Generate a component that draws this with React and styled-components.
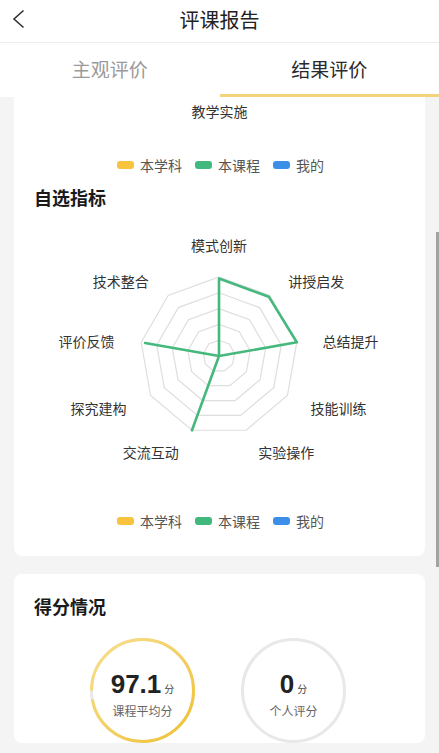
import styled, { createGlobalStyle } from "styled-components";

const GlobalStyle = createGlobalStyle`
  body {
    margin: 0;
    background: #f4f4f4;
    font-family: "Noto Sans CJK SC", "Noto Sans", sans-serif;
  }
`;

const AXES = ["模式创新", "讲授启发", "总结提升", "技能训练", "实验操作", "交流互动", "探究建构", "评价反馈", "技术整合"];
const VALUES = [0.98, 0.98, 1, 0, 0, 1, 0, 0.95, 0];
const LEGEND = [
  { name: "本学科", color: "#f8c43f" },
  { name: "本课程", color: "#41b97c" },
  { name: "我的", color: "#3b8fe8" },
];

const CX = 205;
const CY = 132;
const R = 79;

const pt = (i, r) => {
  const a = (i * 2 * Math.PI) / AXES.length;
  return [CX + r * Math.sin(a), CY - r * Math.cos(a)];
};

const Legend = () => (
  <LegendRow>
    {LEGEND.map((l) => (
      <LegendItem key={l.name}>
        <Swatch $color={l.color} />
        {l.name}
      </LegendItem>
    ))}
  </LegendRow>
);

const Radar = () => {
  const rings = [1, 2, 3, 4, 5].map((k) =>
    AXES.map((_, i) => pt(i, (R * k) / 5).join(",")).join(" ")
  );
  const line = VALUES.map((v, i) => pt(i, R * v).join(",")).join(" ");
  return (
    <ChartSvg viewBox="0 0 411 250">
      {rings.map((p, k) => (
        <polygon key={k} points={p} fill="none" stroke="#dedede" strokeWidth="1.2" />
      ))}
      <polygon points={line} fill="none" stroke="#45b97c" strokeWidth="2.6" strokeLinejoin="round" />
      {AXES.map((name, i) => {
        const a = (i * 2 * Math.PI) / AXES.length;
        const s = Math.sin(a);
        const [x, y] = pt(i, 100);
        if (i === 0) {
          return (
            <text key={name} x={CX} y={CY - 111} textAnchor="middle" dominantBaseline="central">
              {name}
            </text>
          );
        }
        return (
          <text
            key={name}
            x={x + (s > 0 ? 5 : -6)}
            y={y + 2}
            textAnchor={s > 0 ? "start" : "end"}
            dominantBaseline="central"
          >
            {name}
          </text>
        );
      })}
    </ChartSvg>
  );
};

const ScoreRing = ({ value, percent, label }) => {
  const r = 51;
  const c = 2 * Math.PI * r;
  const id = `g${label}`;
  return (
    <Ring>
      <RingSvg viewBox="0 0 105 105">
        <defs>
          <linearGradient id={id} x1="0" y1="0" x2="1" y2="1">
            <stop offset="0" stopColor="#f0c030" />
            <stop offset="1" stopColor="#f9e08f" />
          </linearGradient>
        </defs>
        <circle cx="52.5" cy="52.5" r={r} fill="none" stroke="#e8e8e8" strokeWidth="3" />
        {percent > 0 && (
          <circle
            cx="52.5"
            cy="52.5"
            r={r}
            fill="none"
            stroke={`url(#${id})`}
            strokeWidth="3"
            strokeDasharray={`${c * percent} ${c}`}
            transform="rotate(180 52.5 52.5)"
          />
        )}
      </RingSvg>
      <Score>
        {value}
        <Unit>分</Unit>
      </Score>
      <ScoreLabel>{label}</ScoreLabel>
    </Ring>
  );
};

export default function App() {
  return (
    <Page>
      <GlobalStyle />
      <Header>
        <Back>
          <svg width="13" height="20" viewBox="0 0 13 20">
            <path d="M11.5 1.5 L2 10 L11.5 18.5" fill="none" stroke="#333" strokeWidth="1.6" />
          </svg>
        </Back>
        <Title>评课报告</Title>
        <span />
      </Header>
      <Tabs>
        <Tab>主观评价</Tab>
        <Tab $active>结果评价</Tab>
      </Tabs>
      <Content>
        <Card $cut>
          <AxisCaption>教学实施</AxisCaption>
          <Legend />
          <Heading>自选指标</Heading>
          <Radar />
          <Legend />
        </Card>
        <Card>
          <Heading>得分情况</Heading>
          <Scores>
            <ScoreRing value="97.1" percent={0.971} label="课程平均分" />
            <ScoreRing value="0" percent={0} label="个人评分" />
          </Scores>
        </Card>
      </Content>
      <ScrollThumb />
    </Page>
  );
}

const Page = styled.div`
  position: relative;
  width: 439px;
  height: 753px;
  display: flex;
  flex-direction: column;
  overflow: hidden;
  background: #f4f4f4;
`;

const Header = styled.header`
  height: 43px;
  padding-bottom: 4px;
  box-sizing: border-box;
  display: grid;
  grid-template-columns: 44px 1fr 44px;
  align-items: center;
  background: #fff;
  border-bottom: 1px solid #ececec;
  flex-shrink: 0;
`;

const Back = styled.div`
  display: flex;
  align-items: center;
  padding-left: 12px;
`;

const Title = styled.h1`
  margin: 0;
  text-align: center;
  font-size: 20px;
  font-weight: 400;
  color: #222;
`;

const Tabs = styled.nav`
  display: grid;
  grid-template-columns: 1fr 1fr;
  background: #fff;
  flex-shrink: 0;
`;

const Tab = styled.div`
  height: 54px;
  box-sizing: border-box;
  display: flex;
  align-items: center;
  justify-content: center;
  font-size: 19px;
  color: ${(p) => (p.$active ? "#2a2a2a" : "#9a9a9a")};
  border-bottom: 3px solid ${(p) => (p.$active ? "#f3d37c" : "transparent")};
`;

const Content = styled.main`
  flex: 1;
  display: flex;
  flex-direction: column;
  gap: 18px;
  padding: 0 14px;
`;

const Card = styled.section`
  display: flex;
  flex-direction: column;
  background: #fff;
  border-radius: ${(p) => (p.$cut ? "0 0 8px 8px" : "8px")};
  padding: ${(p) => (p.$cut ? "4px 0 25px" : "20px 0 0")};
  flex-shrink: 0;
`;

const AxisCaption = styled.div`
  text-align: center;
  font-size: 14px;
  line-height: 20px;
  color: #333;
`;

const LegendRow = styled.div`
  display: flex;
  justify-content: center;
  gap: 13px;
  font-size: 14px;
  line-height: 20px;
  color: #555;
  margin-top: 34px;
  padding-left: 2px;
`;

const LegendItem = styled.div`
  display: flex;
  align-items: center;
  gap: 6px;
`;

const Swatch = styled.span`
  width: 17px;
  height: 8px;
  border-radius: 3px;
  background: ${(p) => p.$color};
`;

const Heading = styled.h2`
  margin: 0;
  padding-left: 20px;
  font-size: 18px;
  line-height: 25px;
  font-weight: 700;
  color: #1a1a1a;
  ${LegendRow} + & {
    margin-top: 10px;
  }
`;

const ChartSvg = styled.svg`
  display: block;
  width: 411px;
  height: 250px;
  margin-top: 14px;
  margin-bottom: 3px;
  font-size: 14px;
  fill: #333;
  font-family: "Noto Sans CJK SC", sans-serif;
`;

const Scores = styled.div`
  display: flex;
  justify-content: center;
  gap: 46px;
  margin-top: 19px;
  padding-right: 3px;
`;

const Ring = styled.div`
  position: relative;
  width: 105px;
  height: 105px;
  box-sizing: border-box;
  padding-top: 31px;
  display: flex;
  flex-direction: column;
  align-items: center;
`;

const RingSvg = styled.svg`
  position: absolute;
  inset: 0;
  width: 105px;
  height: 105px;
`;

const Score = styled.div`
  position: relative;
  display: flex;
  align-items: baseline;
  font-family: "Liberation Sans", Arial, sans-serif;
  font-size: 26px;
  font-weight: 700;
  line-height: 30px;
  color: #222;
`;

const Unit = styled.span`
  font-family: "Noto Sans CJK SC", sans-serif;
  font-size: 10px;
  font-weight: 400;
  margin-left: 3px;
  color: #444;
`;

const ScoreLabel = styled.div`
  position: relative;
  font-size: 12px;
  line-height: 18px;
  color: #666;
  margin-top: -2px;
`;

const ScrollThumb = styled.div`
  position: absolute;
  right: 0;
  top: 232px;
  width: 3px;
  height: 335px;
  background: #a3a3a3;
`;
